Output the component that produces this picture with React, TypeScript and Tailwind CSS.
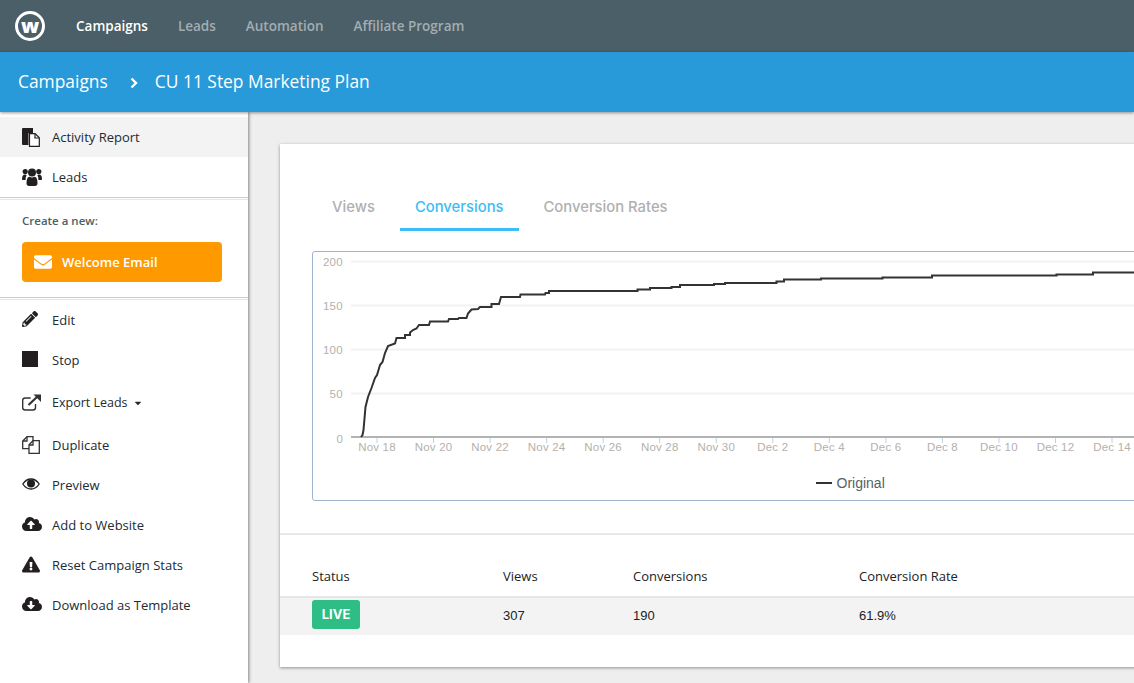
import type { ReactNode } from 'react'
import {
  FaEnvelope,
  FaPencilAlt,
  FaCloudUploadAlt,
  FaExclamationTriangle,
  FaCloudDownloadAlt,
  FaCaretDown,
} from 'react-icons/fa'

const navLinks = ['Campaigns', 'Leads', 'Automation', 'Affiliate Program']

const xLabels = [
  'Nov 18', 'Nov 20', 'Nov 22', 'Nov 24', 'Nov 26', 'Nov 28', 'Nov 30',
  'Dec 2', 'Dec 4', 'Dec 6', 'Dec 8', 'Dec 10', 'Dec 12', 'Dec 14',
]

// page coordinates read off the screenshot, shifted into the chart box when drawn
const linePoints = [
  [361, 437], [362.5, 435], [363.5, 430], [365.5, 407], [368, 397], [371.5, 388], [375, 378], [377, 375],
  [380, 365], [382.5, 362], [385, 353], [388, 346], [395, 343.5], [396.5, 338], [405, 338], [405, 335],
  [410, 335], [410, 332.5], [413, 330], [416.5, 328.5], [419, 325], [429, 325], [430, 321.5], [448, 321.5],
  [449, 319], [458, 319], [459, 318], [466.5, 318], [468, 313.5], [471.5, 309.5], [478, 309], [480, 307],
  [491.5, 307], [491.5, 304], [499, 304], [501, 297], [520, 297], [520.5, 294.5], [545, 294.5], [545.5, 293],
  [549, 293], [549, 291], [637.5, 291], [637.5, 289.5], [650, 289.5], [650, 288], [671.5, 288], [671.5, 287],
  [680, 287], [680, 285], [714, 285], [714, 284], [725, 284], [725, 283], [776.5, 283], [776.5, 281.5],
  [784, 281.5], [784, 279.5], [821, 279.5], [821, 278.5], [882.5, 278.5], [882.5, 277.5], [932, 277.5],
  [932, 275.5], [1056.5, 275.5], [1056.5, 274.5], [1093, 274.5], [1093, 272.5], [1140, 272.5],
]

function Chart() {
  const ox = 313
  const oy = 252
  const points = linePoints.map(([x, y]) => `${x - ox},${y - oy}`).join(' ')
  const grid = [
    { label: '200', y: 261 },
    { label: '150', y: 305 },
    { label: '100', y: 349 },
    { label: '50', y: 393 },
  ]

  return (
    <svg width="900" height="248" className="block font-['Liberation_Sans',sans-serif]">
      {grid.map((g) => (
        <g key={g.label}>
          <line x1={38} x2={900} y1={g.y - oy + 0.5} y2={g.y - oy + 0.5} stroke="#f2f2f2" strokeWidth="2" />
          <text x={30} y={g.y - oy + 5} textAnchor="end" fontSize="11.5" fill="#b5b0ac" letterSpacing="0.3">
            {g.label}
          </text>
        </g>
      ))}
      <text x={30} y={437 - oy + 6} textAnchor="end" fontSize="11.5" fill="#b5b0ac">0</text>
      <line x1={38} x2={900} y1={437 - oy} y2={437 - oy} stroke="#b3b3b3" strokeWidth="2" />
      {xLabels.map((label, i) => {
        const x = 377 + i * 56.54 - ox
        return (
          <g key={label}>
            <line x1={x} x2={x} y1={438 - oy} y2={443 - oy} stroke="#c0d0e0" />
            <text x={x} y={451 - oy} textAnchor="middle" fontSize="11.5" fill="#b5b0ac" letterSpacing="0.2">
              {label}
            </text>
          </g>
        )
      })}
      <polyline points={points} fill="none" stroke="#333333" strokeWidth="2" />
      <line x1={503} x2={519} y1={231} y2={231} stroke="#333333" strokeWidth="2" />
      <text x={523.5} y={236} fontSize="14" fill="#555f66">Original</text>
    </svg>
  )
}

function FilesIcon() {
  return (
    <svg width="18" height="19" viewBox="0 0 18 19">
      <path d="M1 0h10v5H6.500v12H1a1 1 0 0 1-1-1V1a1 1 0 0 1 1-1z" fill="#231f20" />
      <path d="M7.500 5.600h5.600l4.200 4.200v8.500H7.500z" fill="#fff" stroke="#231f20" strokeWidth="1.200" />
      <path d="M13 6v4h4" fill="none" stroke="#231f20" strokeWidth="1.200" />
    </svg>
  )
}

function UsersIcon() {
  return (
    <svg width="20" height="18" viewBox="0 0 20 18" fill="#231f20">
      <circle cx="10" cy="4.600" r="4" />
      <circle cx="3.200" cy="3.600" r="2.600" />
      <circle cx="16.800" cy="3.600" r="2.600" />
      <path d="M0 11c0-3 1-4.500 3-4.500 .8 0 1 .4 1.600 .8-.8 1.200-1 2.800-1 4.700H1c-.6 0-1-.4-1-1zM20 11c0-3-1-4.500-3-4.500-.8 0-1 .4-1.600 .8 .8 1.200 1 2.800 1 4.700H19c.6 0 1-.4 1-1z" />
      <path d="M4.500 15.500c0-4.500 1-6.800 3-6.800 .8 .5 1.600 .8 2.500 .8s1.700-.3 2.500-.8c2 0 3 2.300 3 6.800 0 1.600-1 2.500-2.500 2.500H7c-1.500 0-2.500-.9-2.500-2.500z" />
    </svg>
  )
}

function ExportIcon() {
  return (
    <svg width="19" height="17" viewBox="0 0 19 17" fill="none" stroke="#333333">
      <path d="M13.500 10v3.500a2.500 2.500 0 0 1-2.500 2.500H3.200a2.500 2.500 0 0 1-2.500-2.500V6.500A2.500 2.500 0 0 1 3.200 4h5.500" strokeWidth="1.400" />
      <path d="M6.500 11L15.500 2.500" strokeWidth="2.200" />
      <path d="M11.500 0.500H19V8L11.500 0.500z" fill="#333333" stroke="none" />
    </svg>
  )
}

function DuplicateIcon() {
  return (
    <svg width="18" height="18" viewBox="0 0 18 18" stroke="#333333" strokeWidth="1.300">
      <path d="M5 .700h6v12H.700V5z" fill="#fff" />
      <path d="M5 1v4H1" fill="none" />
      <path d="M11 4.700h6.300v12.600H7V8.700z" fill="#fff" />
      <path d="M11 5v4H7" fill="none" />
    </svg>
  )
}

function EyeIcon() {
  return (
    <svg width="18" height="12" viewBox="0 0 18 12">
      <path d="M.800 6C3 2.700 5.800 1 9 1s6 1.700 8.200 5C15 9.300 12.200 11 9 11S3 9.300 .800 6z" fill="none" stroke="#231f20" strokeWidth="1.300" />
      <circle cx="9" cy="5.600" r="4" fill="#231f20" />
    </svg>
  )
}

function SideItem({ icon, children, active, className }: { icon: ReactNode; children: ReactNode; active?: boolean; className?: string }) {
  return (
    <div className={`flex items-center pl-[22px] text-[13px] text-[#222b33] ${active ? 'bg-[#f3f3f3]' : ''} ${className ?? 'h-10'}`}>
      <span className="flex w-[30px] shrink-0 items-center text-[#231f20]">{icon}</span>
      <span className="pt-[2px]">{children}</span>
    </div>
  )
}

function Divider() {
  return <div className="h-[3px] border-t border-b border-t-[#cccccc] border-b-[#e6e6e6]" />
}

export default function App() {
  return (
    <div className="flex h-[683px] w-[1134px] flex-col overflow-hidden bg-[#eeeeee] font-['Open_Sans',sans-serif]">
      {/* Top nav */}
      <div className="flex h-[52px] shrink-0 items-center bg-[#4a5f67] pl-[15px]">
        <div className="flex h-[30px] w-[30px] items-center justify-center rounded-full border-[3px] border-white pb-[1px] text-[20px] font-extrabold leading-none text-white">
          w
        </div>
        <div className="ml-[31px] flex gap-[30px] text-[13.5px] font-semibold">
          {navLinks.map((link, i) => (
            <span key={link} className={i === 0 ? 'text-white' : 'text-[#a2adb2]'}>
              {link}
            </span>
          ))}
        </div>
      </div>

      {/* Breadcrumb */}
      <div className="relative z-20 flex h-[60px] shrink-0 items-center bg-[#2899d9] pb-[1px] pl-[18px] text-[17.4px] text-white shadow-[0_1px_3px_rgba(0,0,0,0.4)]">
        <span>Campaigns</span>
        <svg width="8" height="12" viewBox="0 0 8 12" className="ml-[22px] mr-[17px] mt-[2px]" fill="none" stroke="#ffffff" strokeWidth="2.400">
          <path d="M1.500 1.500L6 6l-4.500 4.500" />
        </svg>
        <span>CU 11 Step Marketing Plan</span>
      </div>

      <div className="flex min-h-0 flex-1">
        {/* Sidebar */}
        <div className="relative z-10 w-[248px] shrink-0 bg-white pt-[5px] shadow-[1px_0_3px_rgba(0,0,0,0.45)]">
          <SideItem active icon={<FilesIcon />}>Activity Report</SideItem>
          <SideItem icon={<UsersIcon />}>Leads</SideItem>
          <Divider />
          <div className="pl-[22px] pt-3 text-[11.5px] font-semibold text-[#4a5f67]">Create a new:</div>
          <div className="ml-[22px] mt-[13px] flex h-10 w-[200px] items-center rounded-[4px] bg-[#ff9900] pl-3 text-[13px] font-semibold text-white">
            <FaEnvelope className="mr-[10px] h-[18px] w-[18px]" />
            Welcome Email
          </div>
          <div className="mt-[15px]">
            <Divider />
          </div>
          <div className="-mt-px">
            <SideItem icon={<FaPencilAlt className="h-4 w-4" />}>Edit</SideItem>
            <SideItem icon={<div className="h-4 w-4 bg-[#231f20]" />}>Stop</SideItem>
            <SideItem icon={<ExportIcon />} className="h-[46px]">
              <span className="flex items-center gap-[5px] text-[12.5px]">
                Export Leads <FaCaretDown className="h-[10px] w-[10px]" />
              </span>
            </SideItem>
            <SideItem icon={<DuplicateIcon />} className="h-[39px]">Duplicate</SideItem>
            <SideItem icon={<EyeIcon />}>Preview</SideItem>
            <SideItem icon={<FaCloudUploadAlt className="h-[18px] w-[20px]" />}>Add to Website</SideItem>
            <SideItem icon={<FaExclamationTriangle className="h-[17px] w-[18px]" />}>Reset Campaign Stats</SideItem>
            <SideItem icon={<FaCloudDownloadAlt className="h-[18px] w-[20px]" />}>Download as Template</SideItem>
          </div>
        </div>

        {/* Main */}
        <div className="min-w-0 flex-1 pl-8 pt-8">
          <div className="h-[523px] w-[900px] bg-white shadow-[0_1px_3px_rgba(0,0,0,0.4)]">
            <div className="flex gap-[10px] pl-[37px] pt-[46px] font-['Inter',sans-serif] text-[14.8px] font-medium">
              <div className="h-[41px] px-[15px] pt-[6px] text-[#b0b0b0]">Views</div>
              <div className="h-[41px] border-b-[3px] border-[#3dbdf5] px-[15px] pt-[6px] text-[#3dbdf5]">Conversions</div>
              <div className="h-[41px] px-[15px] pt-[6px] text-[#b0b0b0]">Conversion Rates</div>
            </div>

            <div className="ml-8 mt-5 h-[250px] w-[900px] rounded-[3px] border border-[#9fb5cf]">
              <Chart />
            </div>

            <div className="mt-8 h-[2px] bg-[#e8e8e8]" />

            <div className="flex h-[61px] items-end pb-[10px] pl-8 text-[13px] text-[#222222]">
              <div className="w-[191px]">Status</div>
              <div className="w-[130px]">Views</div>
              <div className="w-[226px]">Conversions</div>
              <div>Conversion Rate</div>
            </div>
            <div className="flex h-[39px] items-center border-t-2 border-[#e6e6e6] bg-[#f3f3f3] pb-[2px] pl-8 font-['Liberation_Sans',sans-serif] text-[13px] text-[#222222]">
              <div className="w-[191px]">
                <span className="-mt-[2px] flex h-[29px] w-12 items-center justify-center rounded-[3px] bg-[#2ebd85] font-['Inter',sans-serif] text-[13px] font-bold text-white">
                  LIVE
                </span>
              </div>
              <div className="w-[130px]">307</div>
              <div className="w-[226px]">190</div>
              <div>61.9%</div>
            </div>
          </div>
        </div>
      </div>
    </div>
  )
}
